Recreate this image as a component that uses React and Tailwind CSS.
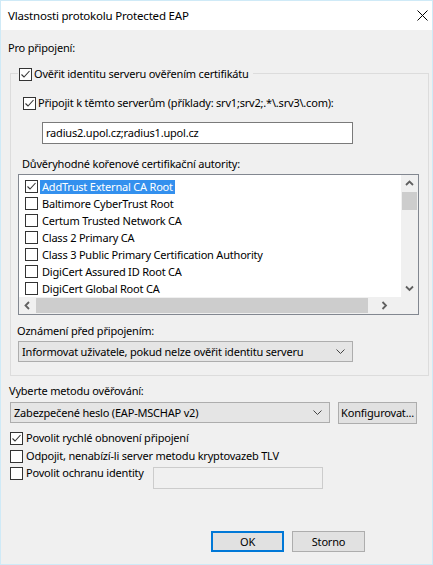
import React from "react";

function Check() {
  return (
    <svg width="11" height="11" viewBox="0 0 11 11" className="block">
      <polyline points="1.5,5.5 4,8 9.5,2" fill="none" stroke="#333" strokeWidth="1.1" />
    </svg>
  );
}

function Box({ checked }) {
  return (
    <span className="w-[13px] h-[13px] shrink-0 border border-[#333333] bg-white flex items-center justify-center">
      {checked ? <Check /> : null}
    </span>
  );
}

function Chevron({ dir }) {
  const pts = {
    up: "1,5 4.5,1.5 8,5",
    down: "1,1.5 4.5,5 8,1.5",
    left: "5,1 1.5,4.5 5,8",
    right: "1.5,1 5,4.5 1.5,8",
  }[dir];
  const vert = dir === "up" || dir === "down";
  return (
    <svg width={vert ? 9 : 7} height={vert ? 7 : 9} viewBox={vert ? "0 0 9 7" : "0 0 7 9"} className="block">
      <polyline points={pts} fill="none" stroke="#606060" strokeWidth="1.8" />
    </svg>
  );
}

function DropArrow() {
  return (
    <svg width="9" height="5" viewBox="0 0 9 5" className="block shrink-0">
      <polyline points="0.5,0.5 4.5,4.5 8.5,0.5" fill="none" stroke="#444" strokeWidth="1" />
    </svg>
  );
}

const certs = [
  "AddTrust External CA Root",
  "Baltimore CyberTrust Root",
  "Certum Trusted Network CA",
  "Class 2 Primary CA",
  "Class 3 Public Primary Certification Authority",
  "DigiCert Assured ID Root CA",
  "DigiCert Global Root CA",
];

export default function App() {
  return (
    <div
      className="w-[433px] h-[565px] bg-[#f0f0f0] border border-[#cfeaf7] flex flex-col text-[11px] tracking-[-0.2px] text-black overflow-hidden whitespace-nowrap"
      style={{ fontFamily: '"Noto Sans", "Open Sans", sans-serif' }}
    >
      {/* title bar */}
      <div className="h-[29px] bg-white flex items-center justify-between pl-[7px] pr-[4px] shrink-0">
        <span className="text-[11.5px] leading-[16px]">Vlastnosti protokolu Protected EAP</span>
        <svg width="11" height="11" viewBox="0 0 11 11">
          <path d="M0.5,0.5 L10.5,10.5 M10.5,0.5 L0.5,10.5" stroke="#000" strokeWidth="1" />
        </svg>
      </div>

      {/* body */}
      <div className="flex flex-col pl-[7px] pr-[4px]">
        <div className="mt-[10px] leading-[16px]">Pro připojení:</div>

        {/* group box */}
        <div className="relative mt-[17px] ml-[2px] w-[419px] border border-[#dcdcdc] pb-[13px] pl-[11px] flex flex-col">
          <div className="absolute left-[7px] top-[-8px] flex items-center bg-[#f0f0f0] pr-[4px] pl-[1px] gap-[2px] leading-[16px]">
            <Box checked />
            <span>Ověřit identitu serveru ověřením certifikátu</span>
          </div>

          <div className="mt-[21px] ml-[1px] flex items-center gap-[2px] leading-[16px]">
            <Box checked />
            <span>Připojit k těmto serverům (příklady: srv1;srv2;.*\.srv3\.com):</span>
          </div>

          <div className="mt-[11px] ml-[20px] w-[311px] h-[22px] border border-[#7a7a7a] bg-white flex items-center pl-[3px] leading-[16px]">
            radius2.upol.cz;radius1.upol.cz
          </div>

          <div className="mt-[12px] leading-[16px]">Důvěryhodné kořenové certifikační autority:</div>

          {/* list box */}
          <div className="mt-[2px] ml-[-4px] w-[401px] h-[141px] border border-[#828790] bg-white flex flex-col">
            <div className="flex h-[122px]">
              <div className="flex-1 flex flex-col pt-[3px]">
                {certs.map((c, i) => (
                  <div key={c} className="h-[17px] flex items-center pl-[6px]">
                    <Box checked={i === 0} />
                    <span
                      className={
                        i === 0
                          ? "ml-[2px] px-[2px] h-[14px] flex items-center bg-[#3390ee] text-white leading-[14px]"
                          : "ml-[2px] px-[2px] h-[14px] flex items-center leading-[14px]"
                      }
                    >
                      {c}
                    </span>
                  </div>
                ))}
              </div>
              <div className="w-[17px] bg-[#f0f0f0] flex flex-col">
                <div className="h-[17px] flex items-center justify-center">
                  <Chevron dir="up" />
                </div>
                <div className="h-[18px] mx-[1px] bg-[#cdcdcd]" />
                <div className="flex-1" />
                <div className="h-[17px] flex items-center justify-center">
                  <Chevron dir="down" />
                </div>
              </div>
            </div>
            <div className="flex h-[17px] bg-[#f0f0f0]">
              <div className="w-[17px] flex items-center justify-center">
                <Chevron dir="left" />
              </div>
              <div className="w-[332px] my-[1px] bg-[#cdcdcd]" />
              <div className="flex-1 flex items-center justify-center">
                <Chevron dir="right" />
              </div>
              <div className="w-[17px] bg-[#f0f0f0]" />
            </div>
          </div>

          <div className="mt-[8px] ml-[-5px] leading-[16px]">Oznámení před připojením:</div>

          <div className="mt-[2px] ml-[-4px] w-[335px] h-[21px] border border-[#adadad] bg-[#e5e5e5] flex items-center justify-between pl-[3px] pr-[7px] leading-[16px]">
            <span>Informovat uživatele, pokud nelze ověřit identitu serveru</span>
            <DropArrow />
          </div>
        </div>

        <div className="mt-[7px] ml-[1px] leading-[16px]">Vyberte metodu ověřování:</div>

        <div className="mt-[3px] ml-[2px] flex items-start gap-[8px]">
          <div className="w-[320px] h-[21px] border border-[#adadad] bg-[#e5e5e5] flex items-center justify-between pl-[3px] pr-[7px] leading-[16px]">
            <span>Zabezpečené heslo (EAP-MSCHAP v2)</span>
            <DropArrow />
          </div>
          <div className="w-[79px] h-[22px] border border-[#adadad] bg-[#e1e1e1] flex items-center justify-center leading-[16px]">
            Konfigurovat...
          </div>
        </div>

        <div className="mt-[7px] ml-[2px] flex items-center gap-[3px] leading-[16px] h-[14px]">
          <Box checked />
          <span>Povolit rychlé obnovení připojení</span>
        </div>
        <div className="mt-[4px] ml-[2px] flex items-center gap-[3px] leading-[16px] h-[14px]">
          <Box />
          <span>Odpojit, nenabízí-li server metodu kryptovazeb TLV</span>
        </div>
        <div className="mt-[4px] ml-[2px] flex items-start gap-[3px]">
          <Box />
          <span className="w-[124px] leading-[12px]">Povolit ochranu identity</span>
          <div className="w-[170px] h-[22px] border border-[#cccccc] bg-[#f0f0f0]" />
        </div>

        <div className="mt-[42px] flex justify-end gap-[8px] pr-[63px]">
          <div className="w-[73px] h-[21px] border-2 border-[#0078d7] bg-[#e1e1e1] flex items-center justify-center leading-[16px]">
            OK
          </div>
          <div className="w-[73px] h-[21px] border border-[#adadad] bg-[#e1e1e1] flex items-center justify-center leading-[16px]">
            Storno
          </div>
        </div>
      </div>
    </div>
  );
}
